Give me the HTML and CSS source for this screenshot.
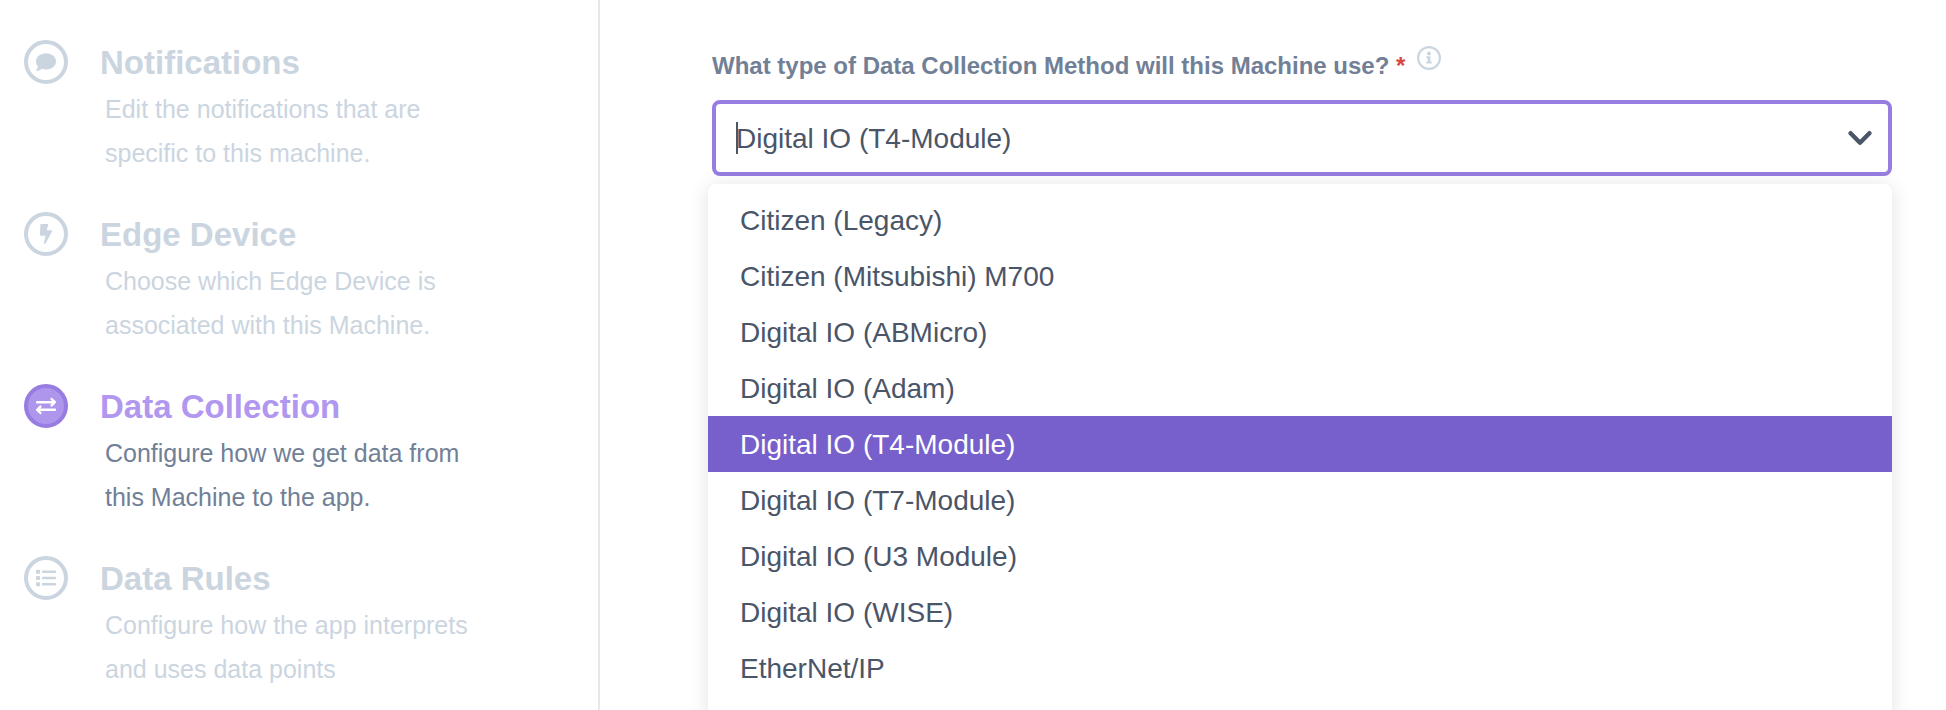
FILE: index.html
```html
<!DOCTYPE html>
<html lang="en">
<head>
<meta charset="utf-8">
<title>Machine setup</title>
<link rel="stylesheet" href="styles.css">
</head>
<body>
<div class="shell">
  <nav class="steps" aria-label="Setup steps">
    <a class="step" href="#notifications">
      <span class="step-icon">
        <svg viewBox="0 0 20 20" aria-hidden="true"><path fill="currentColor" d="M10 1.300c5.500 0 10 3.600 10 8.100s-4.500 8.100-10 8.100c-1.400 0-2.700-.2-3.900-.7C4.700 17.900 2.700 18.900.4 18.900c-.4 0-.5-.4-.3-.7C1 17.200 1.800 15.800 2 14.500.7 13.100 0 11.300 0 9.400c0-4.500 4.500-8.100 10-8.100z"/></svg>
      </span>
      <span class="step-title">Notifications</span>
      <span class="step-text">Edit the notifications that are specific to this machine.</span>
    </a>
    <a class="step" href="#edge-device">
      <span class="step-icon">
        <svg viewBox="0 0 20 20" aria-hidden="true"><path fill="currentColor" d="M5.300 0h5.900c.7 0 1.100.6.900 1.200l-1.400 5h4.500c.8 0 1.200.8.800 1.400L9.500 19.500c-.5.8-1.800.4-1.600-.6l1.600-7.100H4.800c-.6 0-1-.5-.9-1.100L4.400.8c.1-.5.4-.8.900-.8z"/></svg>
      </span>
      <span class="step-title">Edge Device</span>
      <span class="step-text">Choose which Edge Device is associated with this Machine.</span>
    </a>
    <a class="step step-current" href="#data-collection" aria-current="step">
      <span class="step-icon">
        <svg viewBox="0 0 20 20" aria-hidden="true"><path fill="none" stroke="currentColor" stroke-width="2.400" stroke-linecap="round" stroke-linejoin="round" d="M1 6.200h17.500M15.600 3l3.200 3.200-3.200 3.200M19 13.800H1.500M4.400 10.600l-3.200 3.200 3.200 3.200"/></svg>
      </span>
      <span class="step-title">Data Collection</span>
      <span class="step-text">Configure how we get data from this Machine to the app.</span>
    </a>
    <a class="step" href="#data-rules">
      <span class="step-icon">
        <svg viewBox="0 0 20 20" aria-hidden="true"><g fill="currentColor"><rect x="0" y="1.800" width="4" height="4" rx=".8"/><rect x="0" y="8" width="4" height="4" rx=".8"/><rect x="0" y="14.200" width="4" height="4" rx=".8"/><rect x="6" y="2.500" width="14" height="2.600" rx=".8"/><rect x="6" y="8.700" width="14" height="2.600" rx=".8"/><rect x="6" y="14.900" width="14" height="2.600" rx=".8"/></g></svg>
      </span>
      <span class="step-title">Data Rules</span>
      <span class="step-text">Configure how the app interprets and uses data points</span>
    </a>
  </nav>
  <main class="content">
    <div class="field-head">
      <label class="field-label" for="method">What type of Data Collection Method will this Machine use? <span class="required">*</span></label>
      <button class="info" type="button" aria-label="More information">
        <svg viewBox="0 0 24 24" aria-hidden="true"><circle cx="12" cy="12" r="10.900" fill="none" stroke="currentColor" stroke-width="2.200"/><circle cx="12" cy="7.400" r="2" fill="currentColor"/><path fill="currentColor" d="M9.400 10.200h4v5.400h1.300v2H9.300v-2h1.300v-3.400H9.400z"/></svg>
      </button>
    </div>
    <div class="combo">
      <div class="control">
        <input class="control-input" id="method" type="text" role="combobox" aria-expanded="true" aria-controls="methods" value="Digital IO (T4-Module)">
        <span class="caret"></span>
        <button class="toggle" type="button" aria-label="Toggle options">
          <svg viewBox="0 0 24 16" aria-hidden="true"><path fill="none" stroke="currentColor" stroke-width="4.400" stroke-linecap="round" stroke-linejoin="round" d="M2.600 3.200L12 12.800l9.400-9.600"/></svg>
        </button>
      </div>
      <ul class="menu" id="methods" role="listbox" aria-label="Data collection methods">
        <li class="option" role="option">Citizen (Legacy)</li>
        <li class="option" role="option">Citizen (Mitsubishi) M700</li>
        <li class="option" role="option">Digital IO (ABMicro)</li>
        <li class="option" role="option">Digital IO (Adam)</li>
        <li class="option option-selected" role="option" aria-selected="true">Digital IO (T4-Module)</li>
        <li class="option" role="option">Digital IO (T7-Module)</li>
        <li class="option" role="option">Digital IO (U3 Module)</li>
        <li class="option" role="option">Digital IO (WISE)</li>
        <li class="option" role="option">EtherNet/IP</li>
      </ul>
    </div>
  </main>
</div>
</body>
</html>
```

FILE: styles.css
```css
* {
  box-sizing: border-box;
}

body {
  margin: 0;
  background: #fff;
  color: #4a5568;
  font-family: "Liberation Sans", Arial, sans-serif;
}

.shell {
  display: flex;
  height: 100vh;
  overflow: hidden;
}

.steps {
  display: flex;
  flex: none;
  flex-direction: column;
  gap: 36px;
  width: 600px;
  padding: 40px 104px 0 24px;
  border-right: 2px solid #e8e8e9;
}

.step {
  display: grid;
  grid-template-columns: 44px 1fr;
  column-gap: 32px;
  row-gap: 2px;
  color: #cbd5e0;
  text-decoration: none;
}

.step-icon {
  display: flex;
  align-items: center;
  justify-content: center;
  width: 44px;
  height: 44px;
  border: 4px solid #cbd5e0;
  border-radius: 50%;
}

.step-icon svg {
  width: 20px;
  height: 20px;
}

.step-title {
  padding-top: 1px;
  font-size: 33px;
  font-weight: 700;
  line-height: 44px;
}

.step-text {
  grid-column: 2;
  padding: 0 0 1px 5px;
  font-size: 25px;
  line-height: 44px;
}

.step-current .step-icon {
  border-color: #977de1;
  background: #ae96ec;
  color: #fff;
}

.step-current .step-title {
  color: #b197ef;
}

.step-current .step-text {
  color: #718096;
}

.content {
  flex: 1;
  min-width: 0;
  padding: 46px 54px 0 112px;
}

.field-head {
  display: flex;
  align-items: flex-start;
  gap: 12px;
  height: 54px;
}

.field-label {
  padding-top: 4px;
  color: #718096;
  font-size: 24px;
  font-weight: 700;
  line-height: 32px;
}

.required {
  color: #d64541;
}

.info {
  display: flex;
  padding: 0;
  border: 0;
  background: none;
  color: #cbd5e0;
}

.info svg {
  width: 24px;
  height: 24px;
}

.combo {
  position: relative;
}

.control {
  position: relative;
  display: flex;
  align-items: center;
  height: 76px;
  padding: 0 16px 0 20px;
  border: 4px solid #977de1;
  border-radius: 8px;
}

.control-input {
  flex: 1;
  min-width: 0;
  padding: 2px 0 0;
  border: 0;
  outline: 0;
  background: none;
  color: #4a5568;
  font-family: inherit;
  font-size: 28px;
  line-height: 36px;
}

.caret {
  position: absolute;
  top: 18px;
  left: 20px;
  width: 2px;
  height: 32px;
  background: #4a5568;
}

.toggle {
  display: flex;
  padding: 0;
  border: 0;
  background: none;
  color: #4a5568;
}

.toggle svg {
  width: 24px;
  height: 16px;
}

.menu {
  position: absolute;
  top: 84px;
  right: 0;
  left: -4px;
  margin: 0;
  padding: 8px 0 32px;
  border-radius: 8px;
  background: #fff;
  box-shadow: 0 2px 20px rgba(0, 0, 0, 0.12);
  list-style: none;
}

.option {
  padding: 2px 32px 0;
  font-size: 28px;
  line-height: 54px;
}

.option-selected {
  background: #775fcc;
  color: #fff;
}
```
